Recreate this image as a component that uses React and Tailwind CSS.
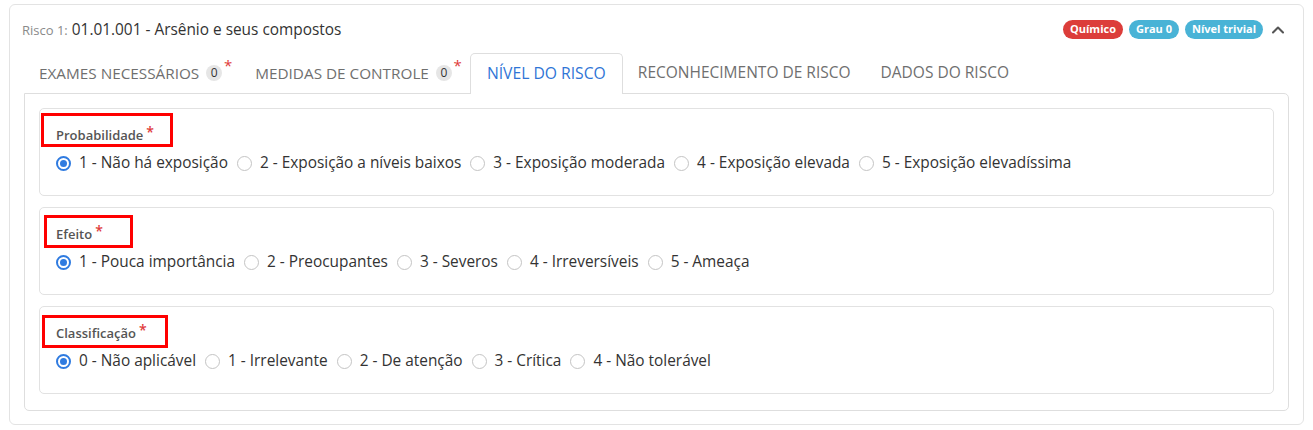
import React, { useState } from 'react';
import { ChevronUp } from 'lucide-react';

const tabs = [
  { name: 'EXAMES NECESSÁRIOS', count: 0, required: true },
  { name: 'MEDIDAS DE CONTROLE', count: 0, required: true },
  { name: 'NÍVEL DO RISCO', active: true },
  { name: 'RECONHECIMENTO DE RISCO' },
  { name: 'DADOS DO RISCO' },
];

const groups = [
  {
    label: 'Probabilidade',
    box: 'left-[1px] top-[4px] w-[132px] h-[34px]',
    options: ['1 - Não há exposição', '2 - Exposição a níveis baixos', '3 - Exposição moderada', '4 - Exposição elevada', '5 - Exposição elevadíssima'],
  },
  {
    label: 'Efeito',
    box: 'left-[4px] top-[7px] w-[89px] h-[33px]',
    options: ['1 - Pouca importância', '2 - Preocupantes', '3 - Severos', '4 - Irreversíveis', '5 - Ameaça'],
  },
  {
    label: 'Classificação',
    box: 'left-[2px] top-[8px] w-[126px] h-[33px]',
    options: ['0 - Não aplicável', '1 - Irrelevante', '2 - De atenção', '3 - Crítica', '4 - Não tolerável'],
  },
];

const Radio = ({ checked, label, onClick }) => (
  <label className="flex items-center gap-[8px] cursor-pointer" onClick={onClick}>
    {checked ? (
      <span className="w-[15px] h-[15px] rounded-full border-[2px] border-[#2f7be0] flex items-center justify-center">
        <span className="w-[7px] h-[7px] rounded-full bg-[#2f7be0]" />
      </span>
    ) : (
      <span className="w-[15px] h-[15px] rounded-full border-[1.5px] border-[#c4c4c4] bg-white" />
    )}
    <span>{label}</span>
  </label>
);

const RadioGroup = ({ group }) => {
  const [value, setValue] = useState(0);
  return (
    <div className="relative border border-[#e2e2e2] rounded-[5px] pt-[17px] px-[16px] pb-[22px]">
      {/* annotation box */}
      <div className={`absolute border-[3px] border-[#ff0000] ${group.box}`} />
      <div className="h-[18px] leading-[18px] text-[13px] font-semibold text-[#555] flex items-start">
        {group.label}
        <span className="text-[#e03b3b] text-[14px] ml-[3px] leading-[12px]">*</span>
      </div>
      <div className="mt-[9px] h-[20px] flex items-center gap-[9px] text-[15.4px] text-[#333]">
        {group.options.map((opt, i) => (
          <Radio key={opt} label={opt} checked={value === i} onClick={() => setValue(i)} />
        ))}
      </div>
    </div>
  );
};

const App = () => {
  return (
    <div className="bg-white w-[1313px] h-[430px] pt-[4px] px-[9px] font-['Open_Sans',sans-serif]">
      <div className="border border-[#e3e3e3] rounded-[6px] w-[1295px]">
        {/* Header */}
        <div className="flex items-center justify-between h-[48px] pt-[1px] pl-[12px] pr-[15px]">
          <div className="flex items-baseline gap-[4px]">
            <span className="text-[13px] text-[#8a8a8a]">Risco 1:</span>
            <span className="text-[15.4px] text-[#333]">01.01.001 - Arsênio e seus compostos</span>
          </div>
          <div className="flex items-center">
            <div className="flex items-center gap-[6px] text-[11px] font-bold text-white">
              <span className="h-[19px] px-[7px] rounded-full bg-[#dc3d3a] flex items-center">Químico</span>
              <span className="h-[19px] px-[7px] rounded-full bg-[#49b3d6] flex items-center">Grau 0</span>
              <span className="h-[19px] px-[7px] rounded-full bg-[#49b3d6] flex items-center">Nível trivial</span>
            </div>
            <ChevronUp className="ml-[5px] w-[20px] h-[20px] text-[#555]" strokeWidth={2.5} />
          </div>
        </div>

        <div className="px-[14px] pb-[13px]">
          {/* Tabs */}
          <div className="flex items-end h-[40px] text-[15.3px]">
            {tabs.map((tab) => (
              <div
                key={tab.name}
                className={
                  tab.active
                    ? 'h-[41px] px-[16px] flex items-center border border-b-0 border-[#dedede] rounded-t-[5px] bg-white text-[#2f75d6] text-[15.7px] relative top-[1px]'
                    : tab.required
                    ? 'h-[40px] pl-[15px] pr-[18px] flex items-center text-[#6f6f6f] relative'
                    : 'h-[40px] px-[15px] flex items-center text-[#6f6f6f] text-[15.5px]'
                }
              >
                {tab.name}
                {tab.count !== undefined && (
                  <span className="ml-[7px] min-w-[16px] h-[16px] px-[4px] rounded-full bg-[#e6e6e6] text-[#333] text-[12px] flex items-center justify-center">
                    {tab.count}
                  </span>
                )}
                {tab.required && (
                  <span className="absolute right-[8px] top-[5px] text-[#e03b3b] text-[15px] leading-[15px]">*</span>
                )}
              </div>
            ))}
          </div>

          {/* Tab content */}
          <div className="border border-[#dedede] rounded-b-[5px] rounded-tr-[5px] pt-[14px] px-[14px] pb-[16px] flex flex-col gap-[11px]">
            {groups.map((g) => (
              <RadioGroup key={g.label} group={g} />
            ))}
          </div>
        </div>
      </div>
    </div>
  );
};

export default App;
